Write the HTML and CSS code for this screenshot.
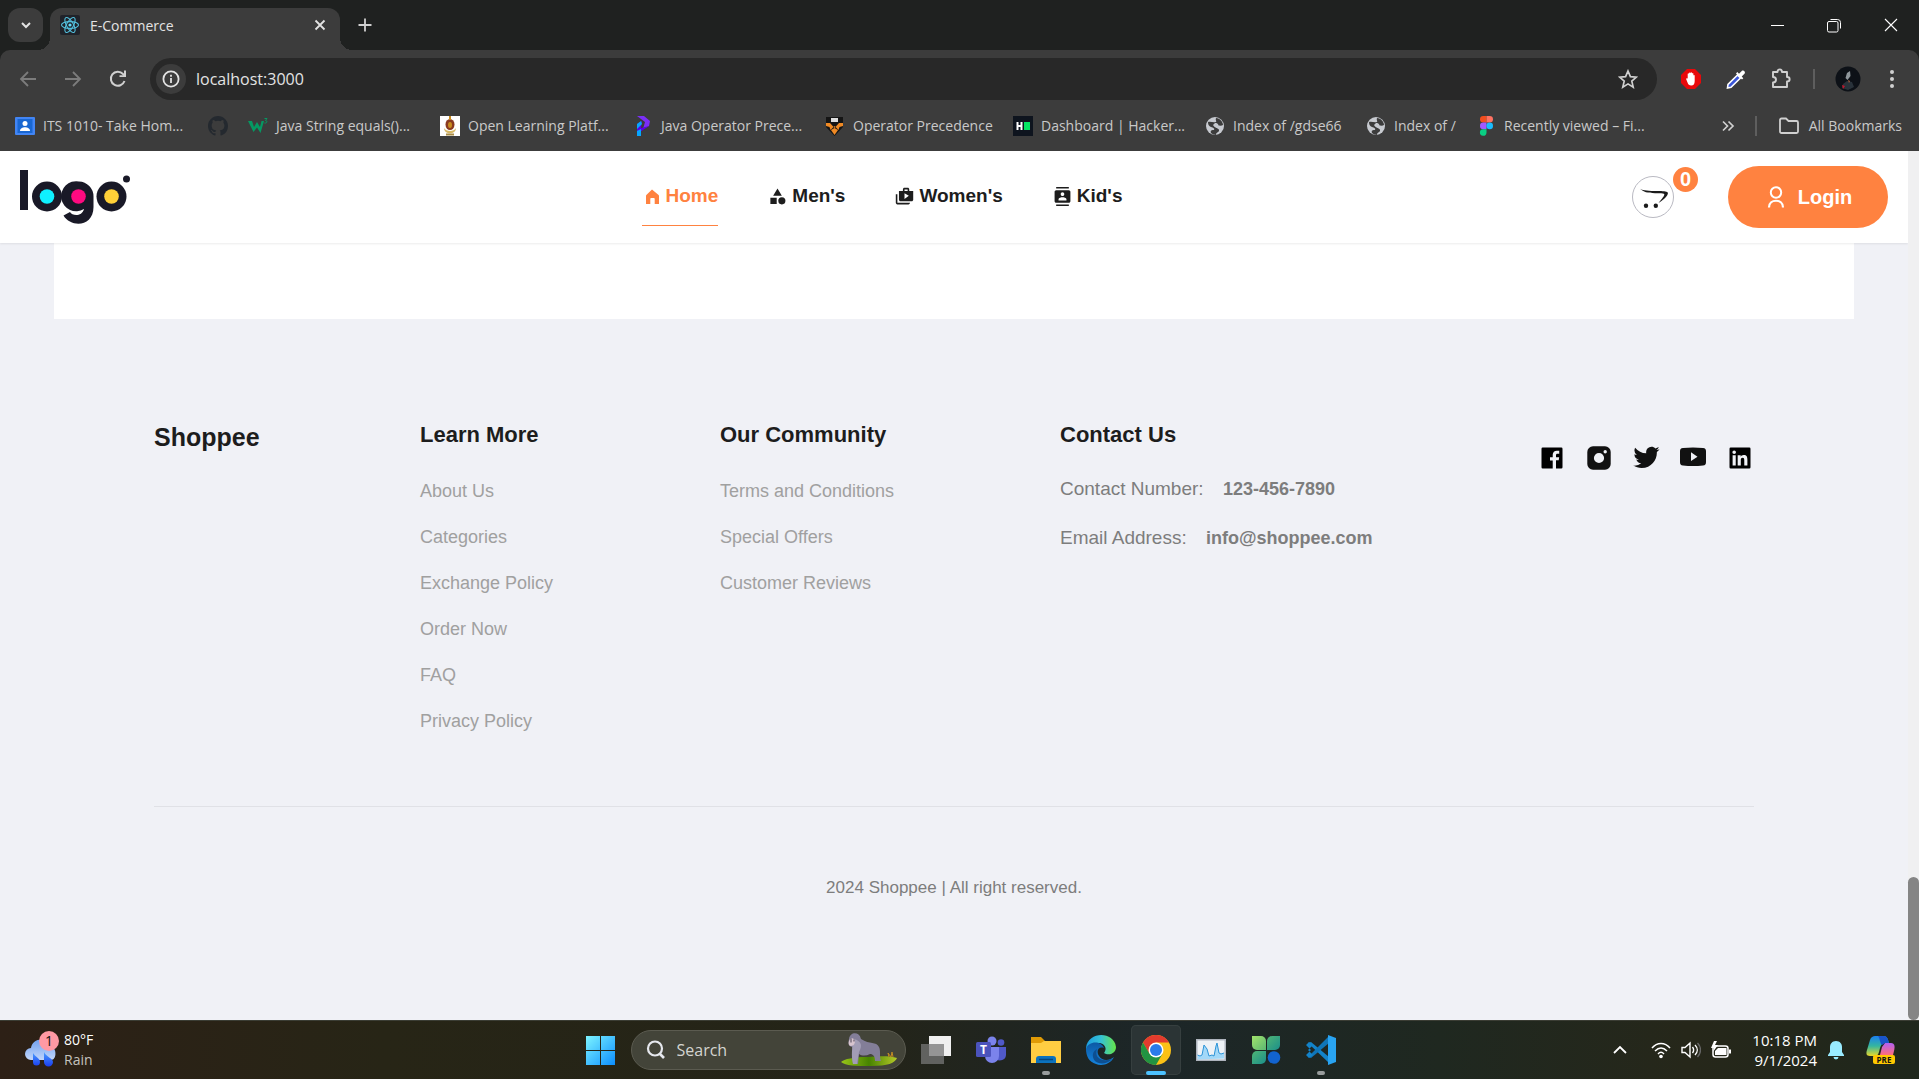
FILE: index.html
```html
<!DOCTYPE html>
<html lang="en">
<head>
<meta charset="utf-8">
<title>E-Commerce</title>
<link rel="stylesheet" href="styles.css">
</head>
<body>
<div class="browser">
  <div class="tabstrip">
    <button class="tab-search" aria-label="Search tabs"><svg width="14" height="14" viewBox="0 0 14 14"><path d="M3 5l4 4 4-4" fill="none" stroke="#e3e3e3" stroke-width="2"/></svg></button>
    <div class="tab">
      <svg class="favicon" width="20" height="20" viewBox="0 0 20 20"><rect width="20" height="20" rx="2" fill="#20232a"/><g fill="none" stroke="#53c1de" stroke-width="1.1"><ellipse cx="10" cy="10" rx="8.5" ry="3.4"/><ellipse cx="10" cy="10" rx="8.5" ry="3.4" transform="rotate(60 10 10)"/><ellipse cx="10" cy="10" rx="8.5" ry="3.4" transform="rotate(120 10 10)"/></g><circle cx="10" cy="10" r="1.6" fill="#61dafb"/></svg>
      <span class="tab-title">E-Commerce</span>
      <button class="plain" aria-label="Close tab"><svg width="20" height="20" viewBox="0 0 20 20"><path d="M5.500 5.500l9 9m0-9l-9 9" stroke="#e3e3e3" stroke-width="1.800"/></svg></button>
    </div>
    <button class="plain new-tab" aria-label="New tab"><svg width="20" height="20" viewBox="0 0 20 20"><path d="M10 3.500v13M3.500 10h13" stroke="#d0d0d0" stroke-width="1.800"/></svg></button>
    <div class="window-controls">
      <button class="plain" aria-label="Minimize"><svg width="16" height="16" viewBox="0 0 16 16"><path d="M2 8.500h13" stroke="#fff"/></svg></button>
      <button class="plain" aria-label="Restore"><svg width="16" height="16" viewBox="0 0 16 16"><path d="M4.500 2.500h7a3 3 0 0 1 3 3v6" fill="none" stroke="#fff"/><rect x="1.500" y="4.500" width="10.500" height="10.500" rx="1.500" fill="none" stroke="#fff"/></svg></button>
      <button class="plain" aria-label="Close"><svg width="16" height="16" viewBox="0 0 16 16"><path d="M2 2l12 12m0-12L2 14" stroke="#fff" stroke-width="1.100"/></svg></button>
    </div>
  </div>
  <div class="toolbar">
    <button class="plain nav-btn" aria-label="Back"><svg width="20" height="20" viewBox="0 0 20 20"><path d="M18 10H3m7-7l-7 7 7 7" fill="none" stroke="#7c7c7c" stroke-width="1.800"/></svg></button>
    <button class="plain nav-btn" aria-label="Forward"><svg width="20" height="20" viewBox="0 0 20 20"><path d="M2 10h15m-7-7l7 7-7 7" fill="none" stroke="#7c7c7c" stroke-width="1.800"/></svg></button>
    <button class="plain nav-btn" aria-label="Reload"><svg width="20" height="20" viewBox="0 0 20 20"><path d="M16.500 12a7 7 0 1 1-1.500-7l2 2" fill="none" stroke="#d0d0d0" stroke-width="2"/><path d="M18 1.500V8h-6.500V6.200H16V1.500z" fill="#d0d0d0"/></svg></button>
    <div class="omnibox">
      <button class="site-info" aria-label="Site information"><svg width="20" height="20" viewBox="0 0 20 20"><circle cx="10" cy="10" r="7.600" fill="none" stroke="#e3e3e3" stroke-width="1.800"/><path d="M10 9v5M10 5.800v1.900" stroke="#e3e3e3" stroke-width="1.800"/></svg></button>
      <input class="url" type="text" value="localhost:3000" aria-label="Address">
      <button class="plain" aria-label="Bookmark this page"><svg width="20" height="20" viewBox="0 0 20 20"><path d="M10 2l2.400 5.600 6 .5-4.600 4 1.400 6-5.200-3.200-5.200 3.200 1.400-6-4.600-4 6-.5z" fill="none" stroke="#d0d0d0" stroke-width="1.700"/></svg></button>
    </div>
    <div class="extensions">
      <button class="plain ext" aria-label="Ad blocker"><svg width="20" height="20" viewBox="0 0 20 20"><path d="M6 0h8l6 6v8l-6 6H6l-6-6V6z" fill="#e8090b"/><path d="M5.300 10.500c-.6-1 .7-1.800 1.400-.8V5c0-1 1.300-1 1.300 0v-.8c0-1 1.500-1 1.500 0V4c0-1 1.500-1 1.500 0v.8c0-1 1.400-1 1.400 0V6.500c0-.8 1.300-.8 1.300 0V12c0 3-1.200 4.500-3.400 4.500s-3-.8-3.800-3z" fill="#fff"/></svg></button>
      <button class="plain ext" aria-label="Color picker"><svg width="20" height="20" viewBox="0 0 20 20"><path d="M11.500 6L2 15.500 1.500 19l3.500-.7L14.500 9z" fill="#3a55d9" stroke="#fff" stroke-width="1.600"/><path d="M10 4.500l6 6 1.300-1.300-1.600-1.700 3-3c1-1.600-1-3.700-2.700-2.800l-3 3L11.300 3z" fill="#fff"/></svg></button>
      <button class="plain ext" aria-label="Extensions"><svg width="22" height="22" viewBox="0 0 22 22"><path d="M3 4h4.500c0-3.500 4.500-3.500 4.500 0h5v5c3.500 0 3.500 4.500 0 4.500V19H3v-4.500c4 0 4-5.500 0-5.500z" fill="none" stroke="#d0d0d0" stroke-width="1.900" stroke-linejoin="round"/></svg></button>
      <span class="bar-divider"></span>
      <button class="plain avatar" aria-label="Profile"><svg width="26" height="26" viewBox="0 0 26 26"><circle cx="13" cy="13" r="12.500" fill="#0d1117"/><path d="M12 7l3-2 .5 5-3 4-2-2z" fill="#8f979c"/><path d="M8 18l4-3 5 1 2 5-6 3-6-2z" fill="#29323a"/><path d="M7 19l3 1-2 3z" fill="#c2152b"/><path d="M13 14l2 1-1 2z" fill="#b0613c"/></svg></button>
      <button class="plain" aria-label="Menu"><svg width="6" height="20" viewBox="0 0 6 20"><g fill="#d0d0d0"><circle cx="3" cy="3" r="2"/><circle cx="3" cy="10" r="2"/><circle cx="3" cy="17" r="2"/></g></svg></button>
    </div>
  </div>
  <nav class="bookmarks" aria-label="Bookmarks">
    <a href="#"><svg width="20" height="20" viewBox="0 0 20 20"><rect y="1" width="20" height="18" rx="1" fill="#4285f4"/><rect x="2.500" y="3" width="15" height="14" fill="#1967d2"/><circle cx="10" cy="7.500" r="2.500" fill="#fff"/><path d="M5 15c0-5 10-5 10 0z" fill="#fff"/></svg>ITS 1010- Take Hom...</a>
    <a href="#" aria-label="GitHub"><svg width="20" height="20" viewBox="0 0 16 16"><path fill="#24292f" d="M8 0C3.580 0 0 3.580 0 8c0 3.540 2.290 6.530 5.470 7.590.4.070.55-.17.55-.38 0-.19-.01-.82-.01-1.490-2.010.37-2.530-.49-2.690-.94-.09-.23-.48-.94-.82-1.130-.28-.15-.68-.52-.01-.53.63-.01 1.080.58 1.230.82.72 1.210 1.870.87 2.330.66.07-.52.28-.87.51-1.070-1.780-.2-3.640-.89-3.640-3.950 0-.87.31-1.590.82-2.150-.08-.2-.36-1.020.08-2.120 0 0 .67-.21 2.200.82a7.600 7.600 0 0 1 4 0c1.530-1.040 2.200-.82 2.200-.82.44 1.100.16 1.920.08 2.120.51.56.82 1.270.82 2.150 0 3.070-1.870 3.750-3.650 3.950.29.25.54.73.54 1.480 0 1.070-.01 1.930-.01 2.200 0 .21.15.46.55.38A8 8 0 0 0 16 8c0-4.420-3.580-8-8-8z"/></svg></a>
    <a href="#"><svg width="20" height="20" viewBox="0 0 20 20"><path d="M0 5h4l2 6 3-5 3 5 1.500-6H16l-3.500 12L9 11.500 5.500 16z" fill="#059862"/><path d="M16.500 2.500h2.500l-1.500 2c2 0 2 3-1 2.500" fill="none" stroke="#059862"/></svg>Java String equals()...</a>
    <a href="#"><svg width="20" height="20" viewBox="0 0 20 20"><rect width="20" height="20" fill="#fff"/><ellipse cx="10" cy="8.500" rx="4.500" ry="5.500" fill="#8a3a20"/><ellipse cx="10" cy="9" rx="2" ry="3" fill="#c98c1e"/><path d="M10 0v4" stroke="#c98c1e" stroke-width="2"/><path d="M4 12c0 7 12 7 12 0-2 4-10 4-12 0z" fill="#d6b765"/><path d="M6 18.500h8" stroke="#a88b45" stroke-width="2"/></svg>Open Learning Platf...</a>
    <a href="#"><svg width="20" height="20" viewBox="0 0 20 20"><path d="M4 0h7l6 5-1 5-6 3 2-7z" fill="#7b2ff7"/><path d="M4 8l5-3-1 7 8-2-6 4-6 4z" fill="#5a00e6"/><path d="M4 8l4-3 1 3-5 5zM4 15l4-2v7H4z" fill="#06a6ff"/></svg>Java Operator Prece...</a>
    <a href="#"><svg width="20" height="20" viewBox="0 0 20 20"><path d="M1 1h17v10l-8.500 9L1 11z" fill="#151515"/><path d="M1 7h4l4.500 5L14 7h4v3l-3.500 1-1 3-4-4-4 4-1-3L1 10z" fill="#f08a24"/><path d="M6 14l3.500-2 3.500 2-3.500 5z" fill="#f08a24"/><path d="M6 2h7v4H6z" fill="#ddd"/></svg>Operator Precedence</a>
    <a href="#"><svg width="20" height="20" viewBox="0 0 20 20"><rect width="20" height="20" fill="#0e141e"/><path d="M4.500 6v8m4-8v8m-4-4h4" stroke="#fff" stroke-width="2"/><rect x="11" y="6" width="6" height="8" fill="#05e563"/></svg>Dashboard | Hacker...</a>
    <a href="#"><svg width="20" height="20" viewBox="0 0 20 20"><circle cx="10" cy="10" r="9" fill="#c7cad0"/><path d="M3 6c3-1 5 1 8 0 1-1-1-2 0-4 4 0 7 4 7 7-3 2-5-1-7 1s4 2 3 5c-1 2-3 1-3 4-1 0-4-1-5-2-1-3 1-3 3-3 1-2-1-2-3-3S3 9 3 6z" fill="#3c3c3c"/><path d="M10 7c3 0 4 2 3 4s-4 0-5-2z" fill="#c7cad0"/></svg>Index of /gdse66</a>
    <a href="#"><svg width="20" height="20" viewBox="0 0 20 20"><circle cx="10" cy="10" r="9" fill="#c7cad0"/><path d="M3 6c3-1 5 1 8 0 1-1-1-2 0-4 4 0 7 4 7 7-3 2-5-1-7 1s4 2 3 5c-1 2-3 1-3 4-1 0-4-1-5-2-1-3 1-3 3-3 1-2-1-2-3-3S3 9 3 6z" fill="#3c3c3c"/><path d="M10 7c3 0 4 2 3 4s-4 0-5-2z" fill="#c7cad0"/></svg>Index of /</a>
    <a href="#"><svg width="20" height="20" viewBox="-3 0 20 20"><path d="M7.500 0v6.600H4.300a3.300 3.300 0 0 1 0-6.600z" fill="#f24e1e"/><path d="M7.500 0h3.200a3.300 3.300 0 0 1 0 6.600H7.500z" fill="#ff7262"/><path d="M7.500 6.600v6.600H4.300a3.300 3.300 0 0 1 0-6.600z" fill="#a259ff"/><circle cx="10.700" cy="9.900" r="3.300" fill="#1abcfe"/><path d="M4.300 13.200h3.200v3.500a3.300 3.300 0 1 1-3.200-3.500z" fill="#0acf83"/></svg>Recently viewed – Fi...</a>
    <button class="plain more" aria-label="More bookmarks"><svg width="14" height="14" viewBox="0 0 14 14"><path d="M2 2.500L6.500 7 2 11.500M7.500 2.500L12 7l-4.500 4.500" fill="none" stroke="#d0d0d0" stroke-width="1.700"/></svg></button>
    <span class="bar-divider"></span>
    <a href="#"><svg width="20" height="20" viewBox="0 0 20 20"><path d="M1 4a1.500 1.500 0 0 1 1.500-1.500H7l2.500 2.500h8A1.500 1.500 0 0 1 19 6.500v9a1.500 1.500 0 0 1-1.500 1.500h-15A1.500 1.500 0 0 1 1 15.500z" fill="none" stroke="#d0d0d0" stroke-width="1.800"/></svg>All Bookmarks</a>
  </nav>
</div>

<div class="viewport">
  <div class="page">
    <header class="site-header">
      <a href="#" class="logo" aria-label="logo"><svg width="112" height="56" viewBox="0 0 112 56"><g fill="#191927"><path d="M0 1h8v40H0z"/><circle cx="27" cy="27.500" r="15"/><path d="M59 12.500A15 15 0 1 0 64 40c-2 8-12 7-14 3l-6.500 3.500C51 59 73.500 58 73.500 38V27.500A15 15 0 0 0 59 12.500z"/><circle cx="91.500" cy="27.500" r="15"/><circle cx="106.500" cy="10" r="3.500"/></g><circle cx="27" cy="27.500" r="7.300" fill="#0ff0ff"/><circle cx="58.500" cy="27.500" r="7.300" fill="#ff0a80"/><circle cx="91.500" cy="27.500" r="7.300" fill="#ffd038"/></svg></a>
      <nav class="main-nav">
        <a href="#" class="active"><svg width="19" height="19" viewBox="0 0 19 19"><path d="M10 2.500l6.300 5.200c.4.300.7.800.7 1.300v8h-4.300v-5.200c0-.6-.3-.9-.9-.9H9.200c-.6 0-.9.3-.9.900V17H4V9c0-.5.2-1 .6-1.300z" fill="#ff8240"/></svg>Home</a>
        <a href="#"><svg width="19" height="19" viewBox="0 0 24 24" fill="#1d1d1d"><path d="M12 2l-5.500 9h11zM3 13.500h8v8H3z"/><circle cx="17.500" cy="17.500" r="4.500"/></svg>Men's</a>
        <a href="#"><svg width="19" height="19" viewBox="0 0 24 24" fill="#1d1d1d"><path d="M3 9H1v11c0 1.110.89 2 2 2h14c1.110 0 2-.89 2-2H3V9zm15-4V3c0-1.110-.89-2-2-2h-4c-1.110 0-2 .89-2 2v2H5v11c0 1.110.89 2 2 2h14c1.110 0 2-.89 2-2V5h-5zm-6-2h4v2h-4V3zm0 12V8l5.500 3-5.500 4z"/></svg>Women's</a>
        <a href="#"><svg width="19" height="19" viewBox="0 0 24 24" fill="#1d1d1d"><path d="M20 0H4v2h16V0zM4 24h16v-2H4v2zM20 4H4c-1.100 0-2 .9-2 2v12c0 1.100.9 2 2 2h16c1.100 0 2-.9 2-2V6c0-1.100-.9-2-2-2zm-8 2.750c1.240 0 2.250 1.010 2.250 2.250s-1.010 2.250-2.250 2.250S9.750 10.240 9.750 9 10.760 6.750 12 6.750zM17 17H7v-1.500c0-1.670 3.330-2.500 5-2.500s5 .83 5 2.500V17z"/></svg>Kid's</a>
      </nav>
      <div class="actions">
        <a href="#" class="cart" aria-label="Cart"><svg width="42" height="42" viewBox="0 0 42 42"><circle cx="21" cy="21" r="20.500" fill="#fff" stroke="#b9b9c2"/><path d="M8 12.800c3.500 1.900 9 2.200 17 2.200 6 0 9.500.200 10.700 1.500 1 1.500-1.500 5.500-9.200 10.500 4-4.700 6-7.300 5.800-8.700-.3-1.300-3.300-1.100-9.300-1.100-7.500 0-11.500-1.200-15-4.400z" fill="#1b1b1b"/><circle cx="14" cy="29.800" r="2.200" fill="#1b1b1b"/><circle cx="23.800" cy="29.800" r="2.200" fill="#1b1b1b"/></svg><span class="badge">0</span></a>
        <button class="login"><svg width="18" height="22" viewBox="0 0 18 22"><circle cx="9" cy="6.500" r="5.200" fill="none" stroke="#fff" stroke-width="2"/><path d="M2 21.500c0-9 14-9 14 0" fill="none" stroke="#fff" stroke-width="2.200"/></svg>Login</button>
      </div>
    </header>
    <main class="content"></main>
    <footer class="site-footer">
      <div class="columns">
        <h1>Shoppee</h1>
        <section>
          <h2>Learn More</h2>
          <ul class="links"><li><a href="#">About Us</a></li><li><a href="#">Categories</a></li><li><a href="#">Exchange Policy</a></li><li><a href="#">Order Now</a></li><li><a href="#">FAQ</a></li><li><a href="#">Privacy Policy</a></li></ul>
        </section>
        <section>
          <h2>Our Community</h2>
          <ul class="links"><li><a href="#">Terms and Conditions</a></li><li><a href="#">Special Offers</a></li><li><a href="#">Customer Reviews</a></li></ul>
        </section>
        <section>
          <h2>Contact Us</h2>
          <div class="contact">
            <p>Contact Number: <a href="#">123-456-7890</a></p>
            <p>Email Address: <a href="#">info@shoppee.com</a></p>
          </div>
        </section>
        <div class="social">
          <a href="#" aria-label="Facebook"><svg width="28" height="28" viewBox="0 0 24 24"><path d="M20 3H4a1 1 0 0 0-1 1v16a1 1 0 0 0 1 1h8.615v-6.960h-2.338v-2.725h2.338v-2c0-2.325 1.420-3.592 3.500-3.592.699-.002 1.399.034 2.095.107v2.420h-1.435c-1.128 0-1.348.538-1.348 1.325v1.735h2.697l-.35 2.725h-2.348V21H20a1 1 0 0 0 1-1V4a1 1 0 0 0-1-1z"/></svg></a>
          <a href="#" aria-label="Instagram"><svg width="28" height="28" viewBox="0 0 28 28"><path fill="#111" fill-rule="evenodd" d="M8 2.300h12a5.700 5.700 0 0 1 5.700 5.700v12a5.700 5.700 0 0 1-5.700 5.700H8A5.700 5.700 0 0 1 2.300 20V8A5.700 5.700 0 0 1 8 2.300zM14 8.900a5.100 5.100 0 1 0 0 10.200 5.100 5.100 0 0 0 0-10.200zM20.200 6a1.700 1.700 0 1 0 0 3.400 1.700 1.700 0 0 0 0-3.400z"/></svg></a>
          <a href="#" aria-label="Twitter"><svg width="28" height="28" viewBox="1 2 21 21"><path fill="#111" d="M19.633 7.997c.013.175.013.349.013.523 0 5.325-4.053 11.461-11.460 11.461-2.282 0-4.402-.661-6.186-1.809.324.037.636.05.973.05a8.070 8.070 0 0 0 5.001-1.721 4.036 4.036 0 0 1-3.767-2.793c.249.037.499.062.761.062.361 0 .724-.05 1.061-.137a4.027 4.027 0 0 1-3.230-3.953v-.05c.537.299 1.160.486 1.820.511a4.022 4.022 0 0 1-1.796-3.354c0-.748.199-1.434.548-2.032a11.457 11.457 0 0 0 8.306 4.215c-.062-.3-.1-.611-.1-.923a4.026 4.026 0 0 1 4.028-4.028c1.160 0 2.207.486 2.943 1.272a7.957 7.957 0 0 0 2.556-.973 4.020 4.020 0 0 1-1.771 2.220 8.073 8.073 0 0 0 2.319-.624 8.645 8.645 0 0 1-2.019 2.083z"/></svg></a>
          <a href="#" aria-label="YouTube"><svg width="28" height="28" viewBox="0 0 28 28"><path fill="#111" fill-rule="evenodd" d="M4 4q10-1.200 20 0c2.300.300 3 1.300 3 3.500v10.500c0 2.200-.7 3.200-3 3.500q-10 1.200-20 0c-2.300-.3-3-1.300-3-3.500V7.500C1 5.300 1.700 4.300 4 4zm8 4.300v8.700l6.500-4.300z"/></svg></a>
          <a href="#" aria-label="LinkedIn"><svg width="28" height="28" viewBox="0 0 24 24"><path d="M20 3H4a1 1 0 0 0-1 1v16a1 1 0 0 0 1 1h16a1 1 0 0 0 1-1V4a1 1 0 0 0-1-1zM8.339 18.337H5.667v-8.590h2.672v8.590zM7.003 8.574a1.548 1.548 0 1 1 0-3.096 1.548 1.548 0 0 1 0 3.096zm11.335 9.763h-2.669V14.160c0-.996-.018-2.277-1.388-2.277-1.390 0-1.601 1.086-1.601 2.207v4.248h-2.667v-8.590h2.560v1.174h.037c.355-.675 1.227-1.387 2.524-1.387 2.704 0 3.203 1.778 3.203 4.092v4.710z"/></svg></a>
        </div>
      </div>
      <p class="copyright">2024 Shoppee | All right reserved.</p>
    </footer>
  </div>
  <div class="scrollbar"><div class="thumb"></div></div>
</div>

<div class="taskbar">
  <button class="plain weather">
    <svg width="34" height="38" viewBox="0 0 34 38"><defs><linearGradient id="cloud" x2="0" y2="1"><stop stop-color="#6fa0f0"/><stop offset="1" stop-color="#c2d6fa"/></linearGradient><linearGradient id="drop" x2="0" y2="1"><stop stop-color="#4ba0ff"/><stop offset="1" stop-color="#1a3df0"/></linearGradient></defs><path d="M6 29a6 6 0 0 1 0-12c1-10 16-12 20-2 6 2 6 14 0 14z" fill="url(#cloud)"/><path d="M8 22c2 4 7 5 7 9a3.500 3.500 0 0 1-7 0zM19 21c2 5 9 6 9 10a4.500 4.500 0 0 1-9 0z" fill="url(#drop)"/><circle cx="24" cy="10" r="10" fill="#ff99a4"/><text x="24" y="15" text-anchor="middle" class="count">1</text></svg>
    <span class="two-lines"><span>80°F</span><span class="dim">Rain</span></span>
  </button>
  <div class="apps">
    <button class="app" aria-label="Start"><svg width="30" height="30" viewBox="0 0 30 30"><defs><linearGradient id="win" x2="1" y2="1"><stop stop-color="#7df4ff"/><stop offset="1" stop-color="#0c8eff"/></linearGradient></defs><path d="M0 1h14v14H0zM15 1h14v14H15zM0 16h14v14H0zM15 16h14v14H15z" fill="url(#win)"/></svg></button>
    <label class="search">
      <svg width="20" height="20" viewBox="0 0 20 20"><circle cx="9" cy="8.500" r="7" fill="none" stroke="#e6e8ee" stroke-width="2.200"/><path d="M13.500 13.500L18 18" stroke="#e6e8ee" stroke-width="2.600"/></svg>
      <input type="text" placeholder="Search" aria-label="Search">
      <svg width="56" height="34" viewBox="0 0 56 34"><defs><linearGradient id="grass" x2="1"><stop stop-color="#99c518"/><stop offset=".5" stop-color="#478300"/><stop offset="1" stop-color="#b5c928"/></linearGradient></defs><path d="M0 29c3-3 13-5 26-5 14-1 24-1 30 1-2 5-9 8-26 8C14 33 5 33 0 29z" fill="url(#grass)"/><path d="M48 24l-1-4 3 4 1-5 1 5" fill="none" stroke="#c18b22"/><path d="M8 6c1-7 10-8 12 0 9 6 15 2 18 8 2 4 0 9 2 14h-6c0-5-2-7-5-7-4 2-8 2-11 0l-1 10h-5c-1-6 1-11-1-17-3 0-4-3-3-8z" fill="#837e98"/><path d="M13 6c7 2 9 6 5 13l-2 12h-4c-2-8-1-18 1-25z" fill="#a29db5"/><path d="M9 6c2-2 5 0 5 2s-1 5-4 5-3-4-1-7z" fill="#d7c4ce"/><path d="M10 5.500v4m3-3v2" stroke="#484457"/></svg>
    </label>
    <button class="app" aria-label="Task view"><svg width="30" height="30" viewBox="0 0 30 30"><path d="M8 1h22v20H8z" fill="#f0f0f0"/><path d="M0 9h23v20H0z" fill="#777" opacity=".75"/></svg></button>
    <button class="app" aria-label="Teams"><svg width="30" height="30" viewBox="0 0 30 30"><circle cx="16" cy="6" r="4.500" fill="#7b83eb"/><circle cx="25" cy="7.500" r="3.300" fill="#5059c9"/><path d="M20 12h10v8a6 6 0 0 1-10 4z" fill="#5059c9"/><path d="M9 12h14v9a7 7 0 0 1-14 0z" fill="#7b83eb"/><rect y="7" width="15" height="15" rx="1.500" fill="#4b53bc"/><text x="7.500" y="19" text-anchor="middle" class="teams-letter">T</text></svg></button>
    <button class="app running" aria-label="File Explorer"><svg width="30" height="30" viewBox="0 0 30 30"><path d="M0 2h10l4 4v5H0z" fill="#e09b06"/><path d="M0 8h10l3-2h17v22H0z" fill="#ffcd42"/><path d="M5 28v-4a3 3 0 0 1 3-3h14a3 3 0 0 1 3 3v4z" fill="#0b72bd"/><path d="M8 24.500h14" stroke="#05467c" stroke-width="1.500"/></svg></button>
    <button class="app" aria-label="Edge"><svg width="30" height="30" viewBox="0 0 30 30"><defs><linearGradient id="edge" x2="1"><stop stop-color="#1b9de2"/><stop offset=".5" stop-color="#35c1d5"/><stop offset="1" stop-color="#66e548"/></linearGradient><linearGradient id="edge2" x2="0" y2="1"><stop stop-color="#0c59a4"/><stop offset="1" stop-color="#1583dd"/></linearGradient></defs><path d="M0 13C2-4 28-4 30 12c0 7-8 9-12 6 4-5 0-11-7-10S1 12 0 17z" fill="url(#edge)"/><path d="M0 14c2-8 15-9 18-1-6-2-8 4-5 8 3 5 10 5 15 1-4 8-13 9-18 7C3 27 0 21 0 14z" fill="url(#edge2)"/><path d="M11 14c-3 7 3 14 15 10-4 5-13 6-17 2-4-5-2-10 2-12z" fill="#0d4f91"/></svg></button>
    <button class="app current" aria-label="Chrome"><svg width="30" height="30" viewBox="0 0 30 30"><circle cx="15" cy="15" r="15" fill="#fbc116"/><path d="M2 7.500a15 15 0 0 1 26 0H15L8.500 19z" fill="#e33b2e"/><path d="M2 7.500a15 15 0 0 0 13 22.500l6.500-11.300L15 15 8.500 18.700z" fill="#229342"/><circle cx="15" cy="15" r="7.500" fill="#fff"/><circle cx="15" cy="15" r="6" fill="#2a7bea"/></svg></button>
    <button class="app" aria-label="Performance monitor"><svg width="30" height="30" viewBox="0 0 30 30"><path d="M0 4h30v22H0z" fill="#aeb4bd"/><path d="M1.500 5.500h27v19h-27z" fill="#eef2f6"/><path d="M1.500 24.500V20l2.500 1 2-1 2-10 3 4 2 7 3-1 2 1 2-10 1-3 2 10 2 1 3-1v5.500z" fill="#a2d8f8"/><path d="M1.500 20l2.500 1 2-1 2-10 3 4 2 7 3-1 2 1 2-10 1-3 2 10 2 1 3-1" fill="none" stroke="#2d94d8"/></svg></button>
    <button class="app" aria-label="Clover"><svg width="30" height="30" viewBox="0 0 30 30"><defs><linearGradient id="leaf" x2="1" y2="1"><stop stop-color="#a2e36b"/><stop offset="1" stop-color="#5cb873"/></linearGradient><linearGradient id="leaf2" x2="1" y2="1"><stop stop-color="#4fb575"/><stop offset="1" stop-color="#1b8f8b"/></linearGradient></defs><path d="M1 1h9a5 5 0 0 1 5 5v9H6a5 5 0 0 1-5-5z" fill="url(#leaf)"/><path d="M29 1v9a5 5 0 0 1-5 5h-8V6a5 5 0 0 1 5-5z" fill="url(#leaf2)"/><path d="M15 16v8a5 5 0 0 1-5 5H1v-8a5 5 0 0 1 5-5z" fill="url(#leaf2)"/><circle cx="23" cy="22.500" r="6.300" fill="#1263cf"/></svg></button>
    <button class="app running" aria-label="Visual Studio Code"><svg width="30" height="30" viewBox="0 0 30 30"><path d="M2 8l3-1 18 15v6z" fill="#1383c9"/><path d="M2 22l3 1L23 8V1z" fill="#0f75b8"/><path d="M0 10l3-3 4 3-5 5 5 5-4 3-3-3 5-5z" fill="#1383c9"/><path d="M22 0l8 3v24l-8 3z" fill="#29a4f2"/></svg></button>
  </div>
  <div class="tray">
    <button class="plain" aria-label="Show hidden icons"><svg width="16" height="16" viewBox="0 0 16 16"><path d="M2 11l6-6 6 6" fill="none" stroke="#fff" stroke-width="1.800"/></svg></button>
    <button class="plain status" aria-label="Network, sound and battery">
      <svg width="20" height="18" viewBox="0 0 20 18"><g fill="none" stroke="#fff" stroke-width="1.500"><path d="M1 7c5-6 13-6 18 0M4 10c4-4 8-4 12 0M7 13c2-2.200 4-2.200 6 0"/></g><circle cx="10" cy="15.500" r="1.800" fill="#fff"/></svg>
      <svg width="20" height="18" viewBox="0 0 20 18"><g fill="none" stroke="#fff" stroke-width="1.400"><path d="M1 6.500h3l5-4.500v14l-5-4.500H1zM11.500 6c1.500 2 1.500 4 0 6M14 4c3 3 3 7 0 10"/><path d="M16.500 2c4 4 4 10 0 14" stroke="#666"/></g></svg>
      <svg width="20" height="18" viewBox="0 0 20 18"><rect x="2" y="5" width="15" height="11" rx="2.500" fill="none" stroke="#fff" stroke-width="1.500"/><path d="M7 7h8.500v7H4v-4zM18 8.500h2v4h-2z" fill="#fff"/><path d="M3 0L0 7h3l-1 4 5-7H4l2-4z" fill="#fff"/></svg>
    </button>
    <span class="two-lines clock"><span>10:18 PM</span><span>9/1/2024</span></span>
    <button class="plain bell" aria-label="Notifications"><svg width="18" height="20" viewBox="0 0 18 20"><path d="M9 1c-4 0-6 3-6 6v5l-2 3v1h16v-1l-2-3V7c0-3-2-6-6-6zM6.500 17a2.500 2.500 0 0 0 5 0z" fill="#99ebff"/></svg></button>
    <button class="plain copilot" aria-label="Copilot"><svg width="30" height="30" viewBox="0 0 30 30"><defs><linearGradient id="cop" x2="0" y2="1"><stop stop-color="#1b80f0"/><stop offset=".5" stop-color="#34b6a0"/><stop offset="1" stop-color="#e8d82a"/></linearGradient><linearGradient id="cop2" x2="0" y2="1"><stop stop-color="#b260f4"/><stop offset="1" stop-color="#ff6d7a"/></linearGradient></defs><path d="M4 5c1-3 3-4 5-4h9c3 0 4 3 5 7h-4c-3 0-4 2-5 5l-1 4c-1 3-2 4-5 4H4c-4 0-4-3-3-6z" fill="url(#cop)"/><path d="M19 8h6c4 0 4 4 3 8l-1 4H14l2-8z" fill="url(#cop2)"/><path d="M12 1h6c3 0 4 3 5 7h-4l-3 2c-2-1-2-7-4-9z" fill="#1954c9"/><rect x="7" y="20" width="22" height="9" rx="2" fill="#ffc800"/><text x="18" y="28" text-anchor="middle" class="pre">PRE</text></svg></button>
  </div>
</div>
</body>
</html>
```
FILE: styles.css
```css
* { box-sizing: border-box; }
body {
  margin: 0;
  height: 100vh;
  display: flex;
  flex-direction: column;
  overflow: hidden;
  font-family: "Liberation Sans", Arial, sans-serif;
}
svg { display: block; flex: none; }
a { color: inherit; text-decoration: none; }
h1, h2, p, ul { margin: 0; padding: 0; }
ul { list-style: none; }
button { font: inherit; color: inherit; border: 0; padding: 0; cursor: pointer; }
.plain { background: none; display: flex; align-items: center; justify-content: center; }

/* Browser frame */
.browser, .taskbar { flex: none; font-family: "Open Sans", "Segoe UI", sans-serif; }
.browser { background: #1f2120; color: #c9c9c9; font-size: 14px; }
.tabstrip { display: flex; height: 50px; padding: 8px 20px 0 8px; }
.tab-search {
  width: 35px;
  height: 34px;
  margin-right: 7px;
  border-radius: 12px;
  background: #3c3c3c;
  display: flex;
  align-items: center;
  justify-content: center;
}
.tab {
  position: relative;
  width: 290px;
  padding: 0 10px 8px;
  display: flex;
  align-items: center;
  gap: 10px;
  background: #3c3c3c;
  border-radius: 12px 12px 0 0;
  color: #e3e3e3;
}
.tab::before, .tab::after {
  content: "";
  position: absolute;
  bottom: 0;
  width: 12px;
  height: 12px;
}
.tab::before { right: 100%; background: radial-gradient(circle at 0 0, transparent 12px, #3c3c3c 12px); }
.tab::after { left: 100%; background: radial-gradient(circle at 100% 0, transparent 12px, #3c3c3c 12px); }
.tab-title { flex: 1; }
.new-tab { width: 50px; height: 34px; }
.window-controls { margin-left: auto; height: 34px; display: flex; gap: 41px; align-items: center; }

.toolbar {
  display: flex;
  align-items: center;
  padding: 8px 24px 4px 5px;
  background: #3c3c3c;
  border-radius: 10px 10px 0 0;
}
.nav-btn { width: 45px; height: 42px; }
.omnibox {
  flex: 1;
  height: 42px;
  margin-left: 10px;
  padding: 0 19px 0 6px;
  display: flex;
  align-items: center;
  gap: 10px;
  background: #282828;
  border-radius: 21px;
}
.site-info {
  width: 30px;
  height: 30px;
  border-radius: 50%;
  background: #3c3c3c;
  display: flex;
  align-items: center;
  justify-content: center;
}
.url {
  flex: 1;
  min-width: 0;
  padding: 0;
  border: 0;
  outline: 0;
  background: none;
  color: #e3e3e3;
  font: 16px "Open Sans", "Segoe UI", sans-serif;
}
.extensions { display: flex; align-items: center; margin-left: 11px; }
.ext { width: 45px; height: 42px; }
.bar-divider { width: 2px; height: 20px; background: #5e5e5e; }
.extensions .bar-divider { margin-left: 10px; }
.avatar { margin: 0 28px 0 20px; }

.bookmarks {
  display: grid;
  grid-template-columns: 193px 40px 192px 193px 192px 188px 192px 161px 110px 1fr 14px 2px auto;
  align-items: center;
  height: 47px;
  padding: 0 17px 4px 15px;
  background: #3c3c3c;
  white-space: nowrap;
}
.bookmarks a { display: flex; align-items: center; gap: 8px; }
.bookmarks .bar-divider { margin-left: 20px; }
.bookmarks a:last-child { margin-left: 42px; gap: 10px; }

/* Web page */
.viewport { flex: 1; min-height: 0; display: flex; }
.page { flex: 1; min-width: 0; overflow: hidden; background: #f0f1f6; color: #1d1d1d; }
.scrollbar { width: 11px; background: #f0f0f1; display: flex; flex-direction: column; justify-content: flex-end; }
.thumb { height: 16.5%; background: #858585; border-radius: 6px; }

.site-header {
  position: relative;
  display: flex;
  align-items: center;
  justify-content: space-between;
  padding: 15px 20px;
  background: #fff;
  box-shadow: 0 1px 2px rgba(0, 0, 0, .08);
}
.main-nav { display: flex; gap: 50px; font-size: 19px; font-weight: 700; }
.main-nav a {
  display: flex;
  align-items: center;
  gap: 5px;
  padding: 17px 0 18px;
  line-height: 22px;
  border-bottom: 1px solid transparent;
}
.main-nav .active { color: #ff8240; border-color: #ff8240; }
.actions { display: flex; align-items: center; gap: 54px; }
.cart { position: relative; }
.badge {
  position: absolute;
  top: -9px;
  left: 41px;
  width: 25px;
  height: 25px;
  border-radius: 50%;
  background: #ff8240;
  color: #fff;
  font-size: 20px;
  font-weight: 700;
  line-height: 25px;
  text-align: center;
}
.login {
  display: flex;
  align-items: center;
  justify-content: center;
  gap: 13px;
  width: 160px;
  height: 62px;
  padding-left: 3px;
  border-radius: 31px;
  background: #ff8240;
  color: #fff;
  font-size: 20px;
  font-weight: 700;
}
.content { height: 76px; margin: 0 54px; background: #fff; }
.site-footer { padding: 100px 154px 0; }
.columns {
  display: grid;
  grid-template-columns: 266px 300px 340px 1fr auto;
  padding-bottom: 73px;
  border-bottom: 1px solid #e0e1e6;
}
h1 { font-size: 25px; line-height: 36px; }
h2 { font-size: 22px; line-height: 32px; }
.links { display: flex; flex-direction: column; gap: 22px; margin-top: 28px; font-size: 18px; line-height: 24px; color: #a0a0a0; }
.contact { display: flex; flex-direction: column; gap: 25px; margin-top: 26px; font-size: 19px; line-height: 24px; color: #7d7d7d; }
.contact a { margin-left: 14px; font-size: 18px; font-weight: 700; }
.social { display: flex; gap: 19px; padding-top: 25px; }
.copyright { margin-top: 69px; text-align: center; font-size: 17px; line-height: 24px; color: #7d7d7d; }

/* Taskbar */
.taskbar {
  display: grid;
  grid-template-columns: 1fr auto 1fr;
  align-items: center;
  height: 59px;
  padding: 0 23px 0 25px;
  border-top: 1px solid #3b3d34;
  background: linear-gradient(90deg, #2d2016, #272516 20%, #242418 45%, #1c2628 60%, #1f2820 75%, #26271a 88%, #1f271c);
  color: #fff;
  font-size: 14px;
}
.weather { justify-self: start; gap: 5px; text-align: left; }
.count { font-size: 14px; fill: #111; }
.two-lines { display: flex; flex-direction: column; line-height: 20px; }
.dim { color: #c4c2be; }
.apps { display: flex; align-items: center; gap: 5px; }
.app {
  position: relative;
  display: flex;
  align-items: center;
  justify-content: center;
  width: 50px;
  height: 50px;
  border-radius: 5px;
  background: none;
}
.running::after, .current::after {
  content: "";
  position: absolute;
  bottom: 0;
  width: 8px;
  height: 4px;
  border-radius: 2px;
  background: #999d9d;
}
.current { background: #2b3435; box-shadow: inset 0 0 0 1px #363f3f; }
.current::after { width: 20px; background: #4cc2ff; }
.search {
  display: flex;
  align-items: center;
  gap: 11px;
  width: 275px;
  height: 40px;
  padding: 0 8px 0 14px;
  border: 1px solid #5b5b50;
  border-radius: 20px;
  background: #434439;
}
.search input { flex: 1; min-width: 0; padding: 0; border: 0; outline: 0; background: none; font: 16px "Open Sans", "Segoe UI", sans-serif; }
.search input::placeholder { color: #d4d4d0; opacity: 1; }
.teams-letter { font-size: 12px; font-weight: 700; fill: #fff; }
.tray { justify-self: end; display: flex; align-items: center; }
.status { gap: 10px; margin: 0 21px 0 23px; }
.clock { font-size: 15px; text-align: right; }
.bell { margin: 0 21px 0 10px; }
.pre { font-size: 8px; font-weight: 700; fill: #111; }
```
